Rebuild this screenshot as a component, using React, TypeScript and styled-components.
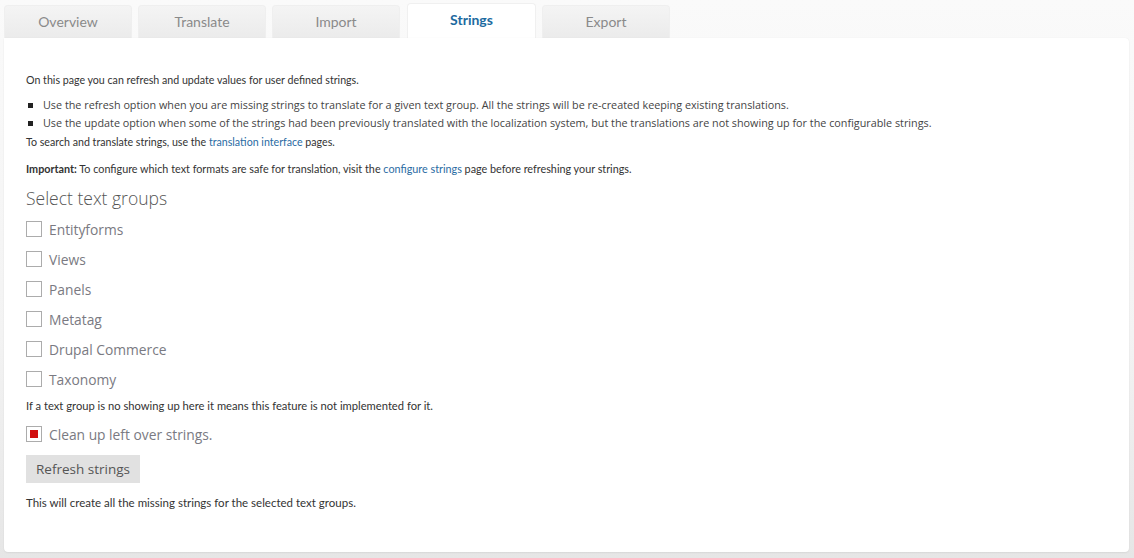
import React from "react";
import styled, { createGlobalStyle } from "styled-components";

const Global = createGlobalStyle`
  html, body { margin: 0; padding: 0; }
  body {
    background: linear-gradient(to bottom, #fafafa 0%, #f3f3f3 60%, #e6e6e6 100%);
    font-family: Lato, "Open Sans", sans-serif;
    width: 1134px;
    height: 558px;
    overflow: hidden;
  }
`;

const Page = styled.div`
  padding: 3px 5px 0 4px;
  display: flex;
  flex-direction: column;
`;

const Tabs = styled.div`
  display: flex;
  gap: 6px;
  align-items: flex-end;
  height: 35px;
`;

const Tab = styled.div<{ $active?: boolean }>`
  width: ${(p) => (p.$active ? 129 : 128)}px;
  height: ${(p) => (p.$active ? 35 : 33)}px;
  box-sizing: border-box;
  border-radius: 4px 4px 0 0;
  background: ${(p) =>
    p.$active ? "#ffffff" : "linear-gradient(to bottom, #f4f4f4, #ebebeb)"};
  border: 1px solid ${(p) => (p.$active ? "#f0f0f0" : "#efefef")};
  border-bottom: none;
  display: flex;
  align-items: center;
  justify-content: center;
  padding-bottom: ${(p) => (p.$active ? 3 : 1)}px;
  font-family: Lato, sans-serif;
  font-size: 14px;
  font-weight: ${(p) => (p.$active ? 700 : 400)};
  color: ${(p) => (p.$active ? "#1c6aa0" : "#8a8a8a")};
  margin-left: ${(p) => (p.$active ? 1 : 0)}px;
`;

const Panel = styled.div`
  background: #fff;
  border-radius: 0 4px 4px 4px;
  box-shadow: 0 1px 2px rgba(0, 0, 0, 0.06), 0 0 1px rgba(0, 0, 0, 0.08);
  padding: 33px 22px 40px 22px;
  height: 514px;
  box-sizing: border-box;
  display: flex;
  flex-direction: column;
  align-items: flex-start;
`;

const Para = styled.p<{ $mt?: number; $size?: number }>`
  margin: ${(p) => p.$mt ?? 0}px 0 0 0;
  font-family: Lato, sans-serif;
  font-size: ${(p) => p.$size ?? 10.65}px;
  line-height: 18px;
  color: #333;
`;

const Link = styled.a`
  color: #2a6ba3;
  text-decoration: none;
`;

const List = styled.ul`
  margin: 7px 0 0 0;
  padding: 0;
  list-style: none;
`;

const Item = styled.li`
  display: flex;
  align-items: center;
  font-family: "Open Sans", sans-serif;
  font-size: 10.8px;
  line-height: 18px;
  color: #444;
  &::before {
    content: "";
    width: 5px;
    height: 5px;
    background: #222;
    margin: 0 10px 0 2px;
  }
`;

const Heading = styled.h2`
  margin: 8px 0 0 0;
  font-family: "Open Sans", sans-serif;
  font-weight: 300;
  font-size: 17.5px;
  line-height: 24px;
  color: #555;
`;

const Options = styled.div<{ $mt: number }>`
  margin-top: ${(p) => p.$mt}px;
  display: flex;
  flex-direction: column;
`;

const Row = styled.label`
  display: flex;
  align-items: center;
  height: 30px;
  gap: 7px;
  font-family: "Open Sans", sans-serif;
  font-size: 13.8px;
  color: #7a7a82;
`;

const Box = styled.span<{ $checked?: boolean }>`
  width: 16px;
  height: 16px;
  box-sizing: border-box;
  border: 1px solid #acacac;
  background: #fff;
  display: flex;
  align-items: center;
  justify-content: center;
  &::after {
    content: "";
    display: ${(p) => (p.$checked ? "block" : "none")};
    width: 8px;
    height: 8px;
    background: #d10f0f;
  }
`;

const Button = styled.button`
  margin-top: 6px;
  height: 28px;
  padding: 0 9px;
  width: 114px;
  border: none;
  background: #e1e1e1;
  font-family: "Open Sans", sans-serif;
  font-size: 13.5px;
  color: #555;
  cursor: pointer;
`;

const groups = ["Entityforms", "Views", "Panels", "Metatag", "Drupal Commerce", "Taxonomy"];

export default function App() {
  return (
    <>
      <Global />
      <Page>
        <Tabs>
          <Tab>Overview</Tab>
          <Tab>Translate</Tab>
          <Tab>Import</Tab>
          <Tab $active>Strings</Tab>
          <Tab>Export</Tab>
        </Tabs>
        <Panel>
          <Para>On this page you can refresh and update values for user defined strings.</Para>
          <List>
            <Item>
              Use the refresh option when you are missing strings to translate for a given text group. All the strings will be re-created keeping existing translations.
            </Item>
            <Item>
              Use the update option when some of the strings had been previously translated with the localization system, but the translations are not showing up for the configurable strings.
            </Item>
          </List>
          <Para $mt={1}>
            To search and translate strings, use the <Link>translation interface</Link> pages.
          </Para>
          <Para $mt={9} $size={10.8}>
            <strong>Important:</strong> To configure which text formats are safe for translation, visit the{" "}
            <Link>configure strings</Link> page before refreshing your strings.
          </Para>
          <Heading>Select text groups</Heading>
          <Options $mt={4}>
            {groups.map((g) => (
              <Row key={g}>
                <Box />
                {g}
              </Row>
            ))}
          </Options>
          <Para $mt={3} $size={11.2}>
            If a text group is no showing up here it means this feature is not implemented for it.
          </Para>
          <Options $mt={4}>
            <Row>
              <Box $checked />
              Clean up left over strings.
            </Row>
          </Options>
          <Button>Refresh strings</Button>
          <Para $mt={11} $size={11.5}>
            This will create all the missing strings for the selected text groups.
          </Para>
        </Panel>
      </Page>
    </>
  );
}
